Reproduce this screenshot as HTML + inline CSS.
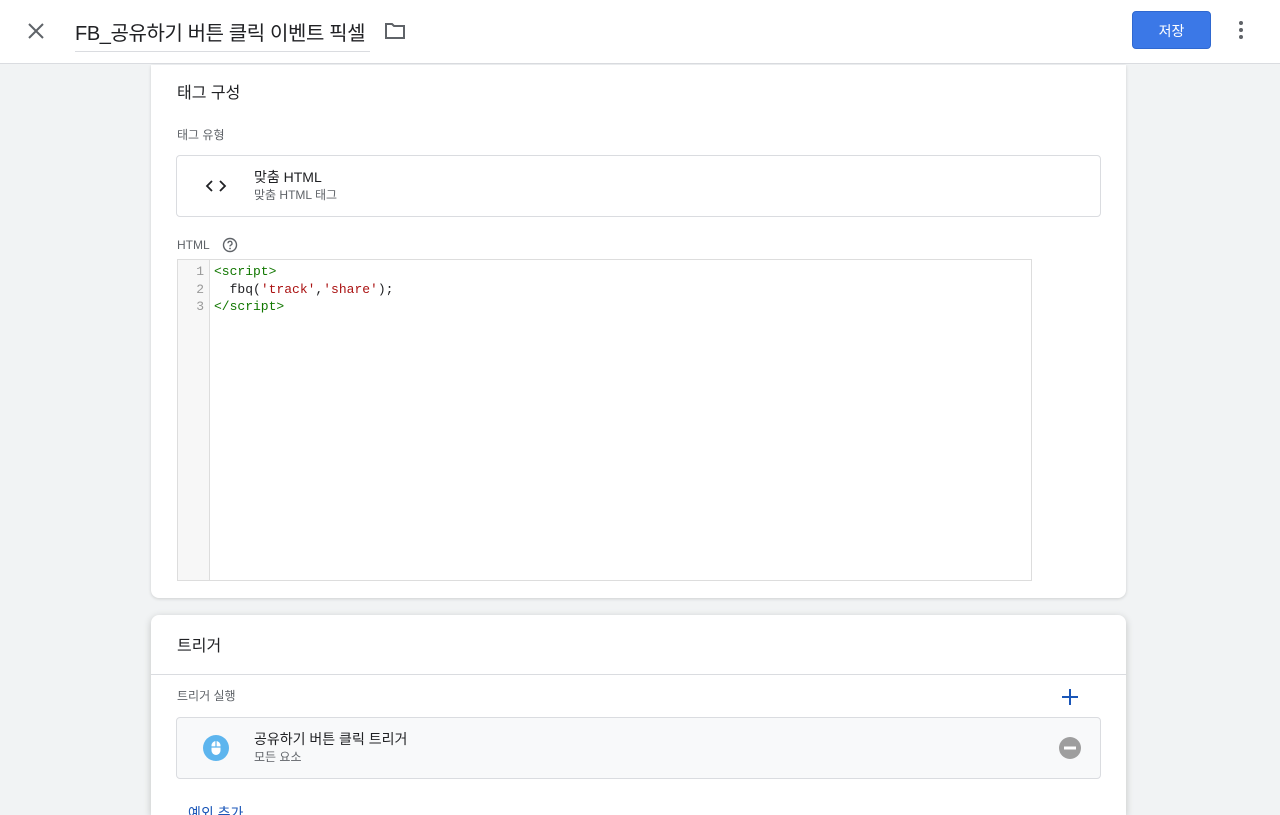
<!DOCTYPE html>
<html><head><meta charset="utf-8"><style>
*{box-sizing:border-box;margin:0;padding:0}
html,body{width:1280px;height:815px;overflow:hidden}
body{background:#f1f3f4;font-family:"Liberation Sans","Noto Sans CJK KR",sans-serif;color:#202124;position:relative}
.hdr{position:absolute;left:0;top:0;width:1280px;height:64px;background:#fff;border-bottom:1px solid #dadce0}
.title{position:absolute;left:75px;top:17px;font-size:20px;letter-spacing:-0.4px;color:#202124;border-bottom:1px solid #dadce0;padding-bottom:5px;width:295px;white-space:nowrap;overflow:hidden}
.btn{position:absolute;left:1132px;top:11px;width:79px;height:38px;background:#3b78e7;border-radius:4px;color:#fff;font-size:14px;text-align:center;line-height:38px;border:1px solid #2f68d0}
.card{position:absolute;left:151px;width:975px;background:#fff;border-radius:8px;box-shadow:0 1px 3px rgba(0,0,0,.15)}
.h{font-size:16px;position:absolute;left:26px}
.lbl{font-size:12px;color:#5f6368;position:absolute;left:26px}
.box{position:absolute;left:25px;width:925px;height:62px;border:1px solid #dadce0;border-radius:4px}
.t1{position:absolute;left:77px;top:11px;font-size:14px}
.t2{position:absolute;left:77px;top:30px;font-size:12px;color:#5f6368}
.code{position:absolute;left:26px;top:194px;width:855px;height:322px;border:1px solid #ddd;background:#fff;font-family:"Liberation Mono",monospace;font-size:13px;line-height:17.5px}
.gut{position:absolute;left:0;top:0;width:32px;height:100%;background:#f7f7f7;border-right:1px solid #ddd;color:#999;text-align:right;padding:3px 5px 0 0}
.src{position:absolute;left:36px;top:3px;white-space:pre}
.g{color:#170}.r{color:#a11}
</style></head><body>
<div class="hdr">
<svg style="position:absolute;left:27px;top:22px" width="18" height="18" viewBox="0 0 18 18"><path d="M2 2L16 16M16 2L2 16" stroke="#5f6368" stroke-width="2"/></svg>
<div class="title">FB_공유하기 버튼 클릭 이벤트 픽셀</div>
<svg style="position:absolute;left:384px;top:21px" width="22" height="20" viewBox="0 0 22 20"><path d="M2 3h6l2 2h10v12H2z" fill="none" stroke="#5f6368" stroke-width="2"/></svg>
<div class="btn">저장</div>
<svg style="position:absolute;left:1238px;top:20px" width="6" height="20" viewBox="0 0 6 20"><circle cx="3" cy="3" r="2" fill="#5f6368"/><circle cx="3" cy="10" r="2" fill="#5f6368"/><circle cx="3" cy="17" r="2" fill="#5f6368"/></svg>
</div>
<div class="card" style="top:65px;height:533px;border-radius:0 0 8px 8px">
<div class="h" style="top:14px">태그 구성</div>
<div class="lbl" style="top:61px">태그 유형</div>
<div class="box" style="top:90px">
<svg style="position:absolute;left:28px;top:23px" width="22" height="14" viewBox="0 0 22 14"><path d="M7 2L2 7l5 5M15 2l5 5-5 5" fill="none" stroke="#202124" stroke-width="1.8"/></svg>
<div class="t1">맞춤 HTML</div><div class="t2">맞춤 HTML 태그</div></div>
<div class="lbl" style="top:173px">HTML</div>
<svg style="position:absolute;left:71px;top:172px" width="16" height="16" viewBox="0 0 16 16"><circle cx="8" cy="8" r="6.5" fill="none" stroke="#5f6368" stroke-width="1.4"/><path d="M6 6.3a2 2 0 1 1 2.6 1.9c-.5.2-.6.6-.6 1.3" fill="none" stroke="#5f6368" stroke-width="1.3"/><circle cx="8" cy="11.5" r=".9" fill="#5f6368"/></svg>
<div class="code"><div class="gut">1<br>2<br>3</div><div class="src"><span class="g">&lt;script&gt;</span>
  fbq(<span class="r">'track'</span>,<span class="r">'share'</span>);
<span class="g">&lt;/script&gt;</span></div></div>
</div>
<div class="card" style="top:615px;height:200px;border-radius:8px 8px 0 0;box-shadow:0 2px 8px rgba(0,0,0,.2);overflow:hidden">
<div class="h" style="top:17px">트리거</div>
<div style="position:absolute;left:0;top:59px;width:975px;border-top:1px solid #dadce0"></div>
<div class="lbl" style="top:72px">트리거 실행</div>
<svg style="position:absolute;left:910px;top:73px" width="18" height="18" viewBox="0 0 18 18"><path d="M9 1v16M1 9h16" stroke="#1a56b8" stroke-width="2"/></svg>
<div class="box" style="top:102px;background:#f8f9fa">
<svg style="position:absolute;left:26px;top:17px" width="26" height="26" viewBox="0 0 26 26"><circle cx="13" cy="13" r="13" fill="#5db5ee"/><rect x="8.5" y="6" width="9" height="14" rx="4.5" fill="#fff"/><path d="M8.5 12h9M13 6v6" stroke="#5db5ee" stroke-width="1.2"/></svg>
<div class="t1">공유하기 버튼 클릭 트리거</div><div class="t2">모든 요소</div>
<svg style="position:absolute;left:882px;top:19px" width="22" height="22" viewBox="0 0 22 22"><circle cx="11" cy="11" r="11" fill="#9e9e9e"/><rect x="5" y="9.5" width="12" height="3" fill="#fff"/></svg>
</div>
<div style="position:absolute;left:37px;top:188px;font-size:14px;color:#1a56b8">예외 추가</div>
</div>
</body></html>
